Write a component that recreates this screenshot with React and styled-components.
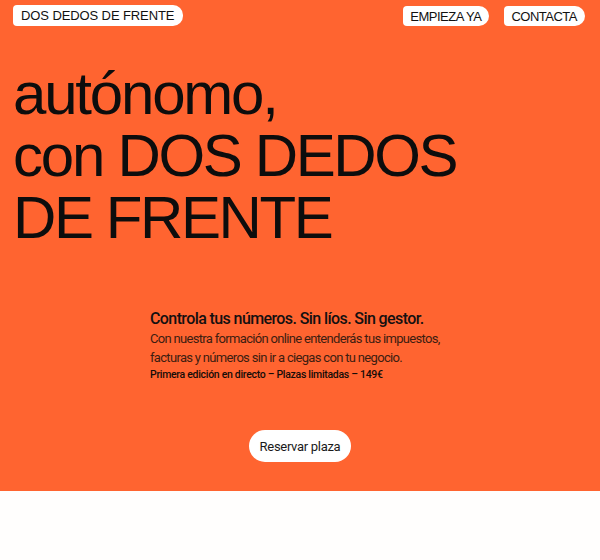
import React from 'react';
import styled, { createGlobalStyle } from 'styled-components';

const GlobalStyle = createGlobalStyle`
  * { box-sizing: border-box; }
  body {
    margin: 0;
    background: #fffefd;
    font-family: 'Liberation Sans', Arial, sans-serif;
    color: #111;
  }
`;

const Hero = styled.section`
  background: #ff6430;
  height: 491px;
  box-shadow: 0 1px 1px rgba(200, 80, 30, 0.5);
  display: flex;
  flex-direction: column;
`;

const Nav = styled.header`
  display: flex;
  justify-content: space-between;
  align-items: flex-start;
  padding: 5px 15px 0 13px;
`;

const NavRight = styled.div`
  display: flex;
  gap: 15px;
  padding-top: 1px;
`;

const Tag = styled.a`
  display: inline-flex;
  align-items: center;
  height: ${(p) => (p.$logo ? '21px' : '20px')};
  padding: ${(p) => (p.$logo ? '0 9px 0 8px' : '0 8px 0 7px')};
  background: #fff;
  color: #111;
  border-radius: 4px 10px 10px 4px;
  font-family: 'Liberation Sans', Arial, sans-serif;
  font-size: 13px;
  letter-spacing: ${(p) => (p.$logo ? '-0.1px' : '-0.5px')};
  text-decoration: none;
  white-space: nowrap;
`;

const Headline = styled.h1`
  margin: 37px 0 0;
  padding-left: 13px;
  font-family: 'Liberation Sans', Arial, sans-serif;
  font-weight: 400;
  font-size: 60px;
  line-height: 62px;
  letter-spacing: -2.2px;
  color: #0d0d0d;
`;

const Caps = styled.span`
  letter-spacing: -2.4px;
`;

const Intro = styled.div`
  width: 300px;
  margin: 61px auto 0;
  font-family: Roboto, 'Liberation Sans', sans-serif;
`;

const Lead = styled.p`
  margin: 0 0 1px;
  font-size: 16px;
  line-height: 18px;
  font-weight: 500;
  letter-spacing: -0.6px;
  color: #141010;
`;

const Body = styled.p`
  margin: 0;
  font-size: 13px;
  line-height: 19px;
  font-weight: 400;
  letter-spacing: -0.68px;
  color: #3d1d10;
`;

const Note = styled.p`
  margin: 0;
  font-size: 10.5px;
  line-height: 16px;
  font-weight: 500;
  letter-spacing: -0.3px;
  color: #140c08;
`;

const Cta = styled.button`
  display: block;
  margin: 47px auto 0;
  height: 32px;
  padding: 0 11px;
  border: 0;
  border-radius: 16px;
  background: #fff;
  color: #1a1a1a;
  font-family: Roboto, 'Liberation Sans', sans-serif;
  font-size: 13px;
  letter-spacing: -0.3px;
  cursor: pointer;
`;

const App = () => {
  return (
    <>
      <GlobalStyle />
      <Hero>
        <Nav>
          <Tag $logo href="#">DOS DEDOS DE FRENTE</Tag>
          <NavRight>
            <Tag href="#">EMPIEZA YA</Tag>
            <Tag href="#">CONTACTA</Tag>
          </NavRight>
        </Nav>
        <Headline>
          autónomo,
          <br />
          con <Caps>DOS DEDOS</Caps>
          <br />
          <Caps>DE FRENTE</Caps>
        </Headline>
        <Intro>
          <Lead>Controla tus números. Sin líos. Sin gestor.</Lead>
          <Body>
            Con nuestra formación online entenderás tus impuestos, facturas y números sin ir a ciegas con tu negocio.
          </Body>
          <Note>Primera edición en directo – Plazas limitadas – 149€</Note>
        </Intro>
        <Cta>Reservar plaza</Cta>
      </Hero>
    </>
  );
};

export default App;
